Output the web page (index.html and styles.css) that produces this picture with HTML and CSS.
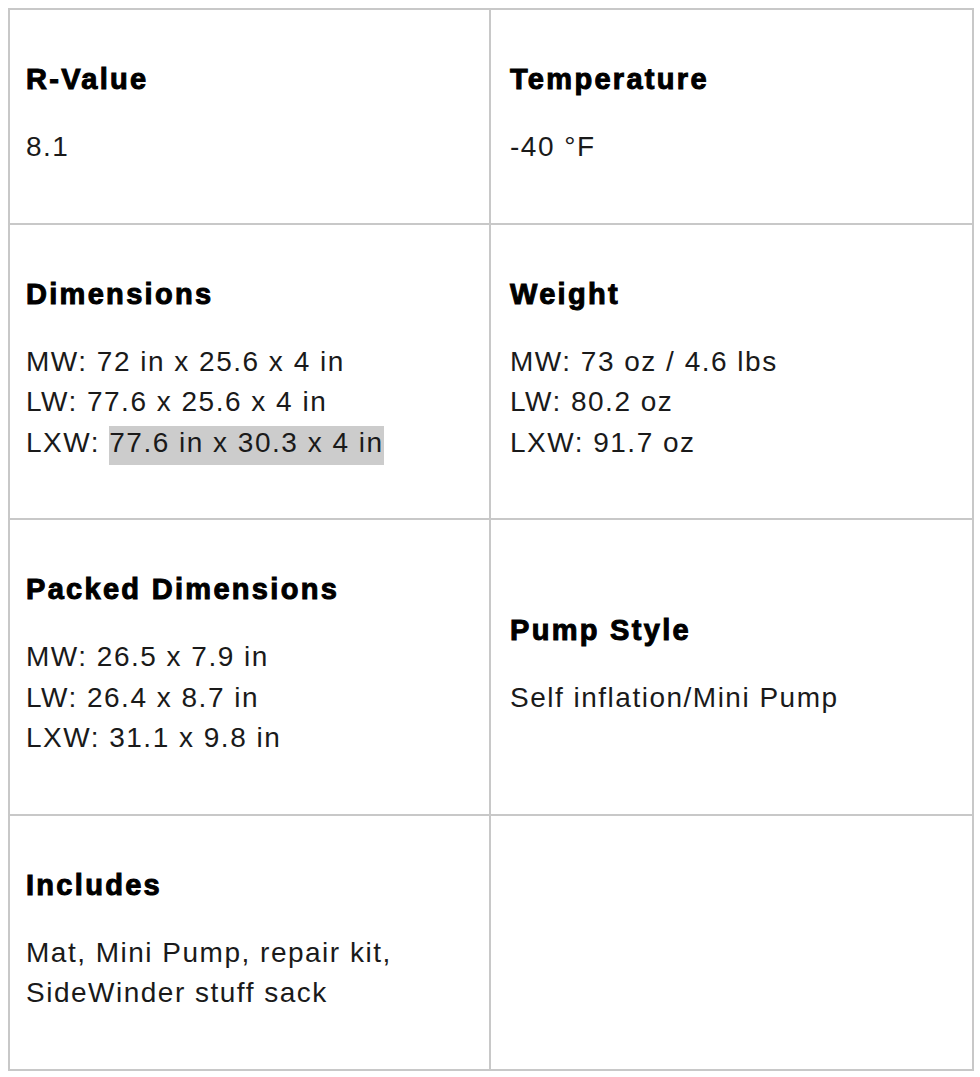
FILE: index.html
```html
<!DOCTYPE html>
<html lang="en">
<head>
<meta charset="utf-8">
<title>Specs</title>
<link rel="stylesheet" href="styles.css">
</head>
<body>
<table class="specs">
  <colgroup>
    <col class="col-left">
    <col class="col-right">
  </colgroup>
  <tr>
    <td class="cell">
      <h3 class="label">R-Value</h3>
      <p class="value">8.1</p>
    </td>
    <td class="cell cell-right">
      <h3 class="label">Temperature</h3>
      <p class="value">-40 °F</p>
    </td>
  </tr>
  <tr>
    <td class="cell">
      <h3 class="label">Dimensions</h3>
      <p class="value">MW: 72 in x 25.6 x 4 in<br>LW: 77.6 x 25.6 x 4 in<br>LXW: <span class="hl">77.6 in x 30.3 x 4 in</span></p>
    </td>
    <td class="cell cell-right">
      <h3 class="label">Weight</h3>
      <p class="value">MW: 73 oz / 4.6 lbs<br>LW: 80.2 oz<br>LXW: 91.7 oz</p>
    </td>
  </tr>
  <tr>
    <td class="cell">
      <h3 class="label">Packed Dimensions</h3>
      <p class="value">MW: 26.5 x 7.9 in<br>LW: 26.4 x 8.7 in<br>LXW: 31.1 x 9.8 in</p>
    </td>
    <td class="cell cell-right">
      <h3 class="label">Pump Style</h3>
      <p class="value">Self inflation/Mini Pump</p>
    </td>
  </tr>
  <tr>
    <td class="cell">
      <h3 class="label">Includes</h3>
      <p class="value">Mat, Mini Pump, repair kit, SideWinder stuff sack</p>
    </td>
    <td class="cell cell-right"></td>
  </tr>
</table>
</body>
</html>
```
FILE: styles.css
```css
html, body {
  background: #ffffff;
}
body {
  margin: 8px 6px 0 8px;
  font-family: "Liberation Sans", Arial, sans-serif;
  color: #1a1a1a;
}
.specs {
  width: 100%;
  table-layout: fixed;
  border-collapse: separate;
  border-spacing: 0;
  border: 1px solid #c8c8c8;
}
.col-left {
  width: 481px;
}
.cell {
  border: 1px solid #c8c8c8;
  padding: 24px 16px;
  vertical-align: middle;
}
.cell-right {
  padding-left: 19px;
}
.label {
  margin: 25px 0 28px;
  font-family: "Liberation Sans", Arial, sans-serif;
  font-weight: bold;
  font-size: 29px;
  line-height: 40px;
  letter-spacing: 2.3px;
  -webkit-text-stroke: 1px #000;
  color: #000;
}
.value {
  margin: 0 0 31px;
  font-size: 28px;
  line-height: 40.5px;
  letter-spacing: 1.5px;
  color: #1a1a1a;
}
.hl {
  background: #cccccc;
  padding: 1px 0 7px;
}
```
